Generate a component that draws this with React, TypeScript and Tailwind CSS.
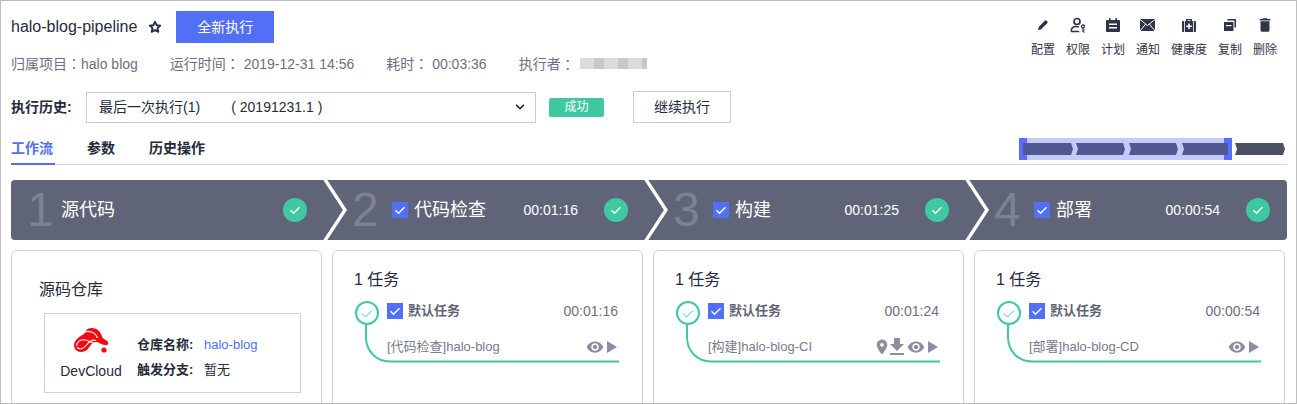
import { MdDelete, MdFileDownload, MdPlace, MdRemoveRedEye } from "react-icons/md";
import { FaChevronDown } from "react-icons/fa";

const font = "font-['Liberation_Sans','Noto_Sans_CJK_SC',sans-serif]";

const Check = ({ className }: { className?: string }) => (
  <svg viewBox="0 0 16 16" className={className} fill="none" stroke="currentColor" strokeWidth="1.4">
    <path d="M3.5 8.2l3 3 6-6" />
  </svg>
);

const CheckBox = () => (
  <span className="flex size-4 shrink-0 items-center justify-center bg-[#526ff8] text-white">
    <Check className="size-4" />
  </span>
);

const DoneCircle = () => (
  <span className="flex size-6 shrink-0 items-center justify-center rounded-full bg-[#3ec9a0] text-white">
    <Check className="size-4" />
  </span>
);

// fullwidth colon sits centred in the reference, TC font draws it that way
const Colon = () => <span className="font-['Noto_Sans_CJK_TC',sans-serif]">：</span>;

const PlayIcon = () => (
  <svg viewBox="0 0 10 12" className="h-3 w-2.5 fill-[#8a8e9e]">
    <path d="M0 0l10 6-10 6z" />
  </svg>
);

const StarIcon = () => (
  <svg viewBox="0 0 14 14" className="size-3.5" fill="none" stroke="#252b3a" strokeWidth="1.9" strokeLinejoin="round">
    <path d="M7 1.800l1.600 3.400 3.600.4-2.700 2.500.8 3.700L7 10l-3.300 1.800.8-3.700-2.700-2.500 3.600-.4z" />
  </svg>
);

const PencilIcon = () => (
  <svg viewBox="0 0 12 12" className="size-3">
    <path fill="#2f3447" d="M1 11l.6-3L8 1.600a1 1 0 0 1 1.400 0l1 1a1 1 0 0 1 0 1.400L4 10.400z" />
  </svg>
);

const PersonKeyIcon = () => (
  <svg viewBox="0 0 16 16" className="size-4" fill="none" stroke="#2f3447" strokeWidth="1.7">
    <circle cx="7" cy="4.500" r="3" />
    <path d="M1.200 14.500c0-3.400 2.200-5 5-5 1 0 1.800.2 2.600.6M1.200 14.500h8" />
    <circle cx="13" cy="9.500" r="1.500" strokeWidth="1.300" />
    <path d="M13 11v4M13 13h1.600M13 15h1.600" strokeWidth="1.200" />
  </svg>
);

const PlanIcon = () => (
  <svg viewBox="0 0 14 14" className="size-3.5">
    <path fill="#2f3447" d="M3 0h1.600v2h4.800V0H11v2h2a1 1 0 0 1 1 1v10a1 1 0 0 1-1 1H1a1 1 0 0 1-1-1V3a1 1 0 0 1 1-1h2z" />
    <path fill="#fff" d="M3 5.500h8v1.600H3zM3 9h8v1.600H3z" />
  </svg>
);

const MailIcon = () => (
  <svg viewBox="0 0 15 12" className="h-3 w-[15px]">
    <rect width="15" height="12" fill="#2f3447" />
    <path fill="none" stroke="#fff" strokeWidth="1" d="M0 .5l7.500 6 7.500-6M0 12l5.500-6.800M15 12L9.500 5.200" />
  </svg>
);

const HealthIcon = () => (
  <svg viewBox="0 0 14 14" className="size-3.5">
    <path fill="#2f3447" d="M4 3V1h6v2h3a1 1 0 0 1 1 1v9a1 1 0 0 1-1 1H1a1 1 0 0 1-1-1V4a1 1 0 0 1 1-1zm1.300 0h3.400V2.200H5.300z" />
    <path fill="#fff" d="M6.200 5.500h1.600v2h2v1.600h-2v2H6.200v-2h-2V7.500h2zM2 3h.8v11H2zM11.200 3h.8v11h-.8z" />
  </svg>
);

const CopyIcon = () => (
  <svg viewBox="0 0 12 12" className="size-3">
    <path fill="#2f3447" d="M3.500 0H12v8.500h-1.500V1.500h-7z" />
    <path fill="#2f3447" d="M0 3h9.500v9H0z" />
    <path fill="#fff" d="M2 6h5.500v1.200H2z" />
  </svg>
);

const DevCloudLogo = () => (
  <svg viewBox="0 0 35 25" className="h-[25px] w-[35px]">
    <path
      fill="#f30a14"
      d="M0 17c0 4 3 7 7 7 3 0 5-1 7-3 2-3 4-7 8-7 3 0 5 3 9 3 2 0 4 0 3-3-1-2-3-2-4-3-2-1-2-3-3-5-1-3-5-6-9-6-5 0-7 3-8 6-2 1-4 2-6 4-2 2-4 4-4 7z"
    />
    <path
      fill="none"
      stroke="#fff"
      strokeWidth="1.100"
      d="M2.500 18c0-4 4-7 9-6 4 1 6 3 9 3M3 19.500c3 2.500 7 1 10-3 3-4 6-5 9-4M8.500 5.500c2-2 6-2.500 9-1.500 3 1 5 3 6 6"
    />
    <circle cx="30" cy="22" r="2.600" fill="#f30a14" />
  </svg>
);

const Action = ({ label, children }: { label: string; children: React.ReactNode }) => (
  <div className="flex flex-col items-center">
    <div className="flex h-4 items-center justify-center">{children}</div>
    <span className="mt-[9px] text-xs leading-4 text-[#2f3447]">{label}</span>
  </div>
);

const Stage = ({
  num,
  name,
  time,
  last,
}: {
  num: number;
  name: string;
  time?: string;
  last?: boolean;
}) => (
  <div className={`${last ? "flex-1" : "w-[321px]"} relative flex h-full items-center`}>
    <span className={`${num === 1 ? "ml-4 w-[34px]" : "ml-5 w-10"} text-5xl leading-none text-[#7d8293]`}>{num}</span>
    {time && (
      <span className="mr-1.5">
        <CheckBox />
      </span>
    )}
    <span className="text-lg leading-6 text-white">{name}</span>
    {time && <span className="ml-auto text-sm text-white">{time}</span>}
    <span className={`${time ? "ml-[26px]" : "ml-auto"} ${last ? "mr-[17px]" : "mr-[25px]"}`}>
      <DoneCircle />
    </span>
    {!last && (
      <svg viewBox="0 0 26 60" className="absolute top-0 left-[310px] h-[60px] w-[26px]" fill="none" stroke="#fff" strokeWidth="3.400">
        <path d="M3 -2L24 30L3 62" />
      </svg>
    )}
  </div>
);

const TaskCard = ({
  time,
  job,
  extra,
}: {
  time: string;
  job: string;
  extra?: boolean;
}) => (
  <div className="relative h-[170px] w-[311px] rounded-t-md border border-[#cfd2de] px-[21px] pt-[19px]">
    <div className="text-base leading-[19px] text-[#252b3a]">1 任务</div>
    <svg viewBox="0 0 270 70" className="absolute top-[47px] left-[21px] h-[70px] w-[270px]" fill="none" stroke="#3ec9a0">
      <circle cx="13" cy="15" r="11" strokeWidth="2" />
      <path d="M8 15.500l3.500 3.500 6.500-6.500" strokeWidth="1" />
      <path d="M12 26v13c0 14 10 24.500 24 24.500h229" strokeWidth="2" />
    </svg>
    <div className="mt-3.5 ml-[33px] flex items-center">
      <CheckBox />
      <span className="ml-[5px] text-[13px] leading-4 font-bold text-[#5e6275]">默认任务</span>
      <span className="mr-[3px] ml-auto text-sm leading-4 text-[#6c7083]">{time}</span>
    </div>
    <div className="mt-5 ml-[33px] flex items-center">
      <span className="text-[13px] leading-4 text-[#777b8e]">{job}</span>
      <span className="mr-1 ml-auto flex h-4 items-center text-[#8a8e9e]">
        {extra && (
          <>
            <MdPlace className="-mr-1 size-[18px]" />
            <MdFileDownload className="-mx-0.5 size-6 shrink-0" />
          </>
        )}
        <MdRemoveRedEye className="size-[18px]" />
        <span className="ml-[3px]">
          <PlayIcon />
        </span>
      </span>
    </div>
  </div>
);

export default function App() {
  return (
    <div className={`${font} h-[404px] w-[1298px] overflow-hidden bg-white`}>
      <div className="h-[404px] w-[1297px] overflow-hidden border border-[#bdbdbd] pt-2.5 pr-[9px] pl-2.5">
        <div className="flex h-[70px] items-start justify-between">
          <div>
            <div className="flex items-center">
              <span className="text-base leading-8 text-[#252b3a]">halo-blog-pipeline</span>
              <span className="ml-[11px]">
                <StarIcon />
              </span>
              <button className="ml-3.5 h-8 w-[98px] bg-[#526ff8] text-sm text-white">全新执行</button>
            </div>
            <div className="mt-[10px] flex text-sm leading-5 text-[#6c7083]">
              <span>
                归属项目
                <Colon />
                halo blog
              </span>
              <span className="ml-8">
                运行时间
                <Colon /> 2019-12-31 14:56
              </span>
              <span className="ml-8">
                耗时
                <Colon /> 00:03:36
              </span>
              <span className="ml-8 flex items-center">
                执行者
                <Colon />
                <span className="ml-[5px] h-[11px] w-[67px] bg-[repeating-linear-gradient(90deg,#dcdcdf_0,#dcdcdf_14px,#c8c8cc_14px,#c8c8cc_24px)]" />
              </span>
            </div>
          </div>
          <div className="mt-1.5 mr-[10px] flex gap-[11px]">
            <Action label="配置">
              <PencilIcon />
            </Action>
            <Action label="权限">
              <PersonKeyIcon />
            </Action>
            <Action label="计划">
              <PlanIcon />
            </Action>
            <Action label="通知">
              <MailIcon />
            </Action>
            <Action label="健康度">
              <HealthIcon />
            </Action>
            <Action label="复制">
              <CopyIcon />
            </Action>
            <Action label="删除">
              <MdDelete className="size-[18px] text-[#2f3447]" />
            </Action>
          </div>
        </div>

        <div className="mt-[10px] flex items-center">
          <span className="w-[75px] text-sm font-bold text-[#252b3a]">执行历史:</span>
          <div className="flex h-[31px] w-[450px] items-center justify-between border border-[#c8cbd9] pr-2.5 pl-3 text-sm text-[#252b3a]">
            <span className="whitespace-pre">最后一次执行(1)        ( 20191231.1 )</span>
            <FaChevronDown className="size-2.5" />
          </div>
          <span className="ml-[13px] flex h-[19px] w-[55px] items-center justify-center rounded-[2px] bg-[#3ec9a0] text-xs text-white">成功</span>
          <button className="ml-[29px] h-8 w-[98px] border border-[#c8cbd9] text-sm text-[#252b3a]">继续执行</button>
        </div>

        <div className="relative mt-2 flex h-[34px] items-center border-b border-[#d0d3e0]">
          <span className="relative flex h-full w-11 items-center text-sm font-bold text-[#526ff8]">
            工作流
            <span className="absolute right-0 -bottom-px left-0 h-0.5 bg-[#526ff8]" />
          </span>
          <span className="ml-8 text-sm font-bold text-[#252b3a]">参数</span>
          <span className="ml-[34px] text-sm font-bold text-[#252b3a]">历史操作</span>
          <svg viewBox="0 0 268 22" className="absolute top-[7px] right-0 h-[22px] w-[268px]">
            <rect width="213" height="22" fill="#c5cbf8" />
            <rect width="8" height="22" fill="#5b6cff" />
            <rect x="205" width="8" height="22" fill="#5b6cff" />
            <path fill="#c5cbf8" d="M4 5h205v12H4z" />
            <path fill="#50598f" d="M4 5h48l2 6-2 6H4zM57 5h47l2 6-2 6H57l2-6zM110 5h47l2 6-2 6h-47l2-6zM163 5h46v12h-46l2-6z" />
            <path fill="#4b5063" d="M216 5h48l2 6-2 6h-48l2-6z" />
          </svg>
        </div>

        <div className="mt-[15px] flex h-[60px] w-[1276px] overflow-hidden rounded bg-[#5f6478]">
          <Stage num={1} name="源代码" />
          <Stage num={2} name="代码检查" time="00:01:16" />
          <Stage num={3} name="构建" time="00:01:25" />
          <Stage num={4} name="部署" time="00:00:54" last />
        </div>

        <div className="mt-2.5 flex gap-2.5">
          <div className="h-[170px] w-[311px] rounded-t-md border border-[#cfd2de] px-8 pt-[29px]">
            <div className="-ml-[5px] text-base leading-[19px] text-[#252b3a]">源码仓库</div>
            <div className="mt-[14px] flex h-20 w-[257px] items-center border border-[#cfd2de] pt-2">
              <div className="-mt-1.5 flex w-[92px] flex-col items-center">
                <DevCloudLogo />
                <span className="mt-2 text-sm leading-5 font-medium text-[#252b3a]">DevCloud</span>
              </div>
              <div className="grid grid-cols-[67px_1fr] gap-y-[9px] text-[13px] leading-4">
                <span className="font-bold text-[#252b3a]">仓库名称:</span>
                <span className="text-[#526ff8]">halo-blog</span>
                <span className="font-bold text-[#252b3a]">触发分支:</span>
                <span className="text-[#252b3a]">暂无</span>
              </div>
            </div>
          </div>
          <TaskCard time="00:01:16" job="[代码检查]halo-blog" />
          <TaskCard time="00:01:24" job="[构建]halo-blog-CI" extra />
          <TaskCard time="00:00:54" job="[部署]halo-blog-CD" />
        </div>
      </div>
    </div>
  );
}
